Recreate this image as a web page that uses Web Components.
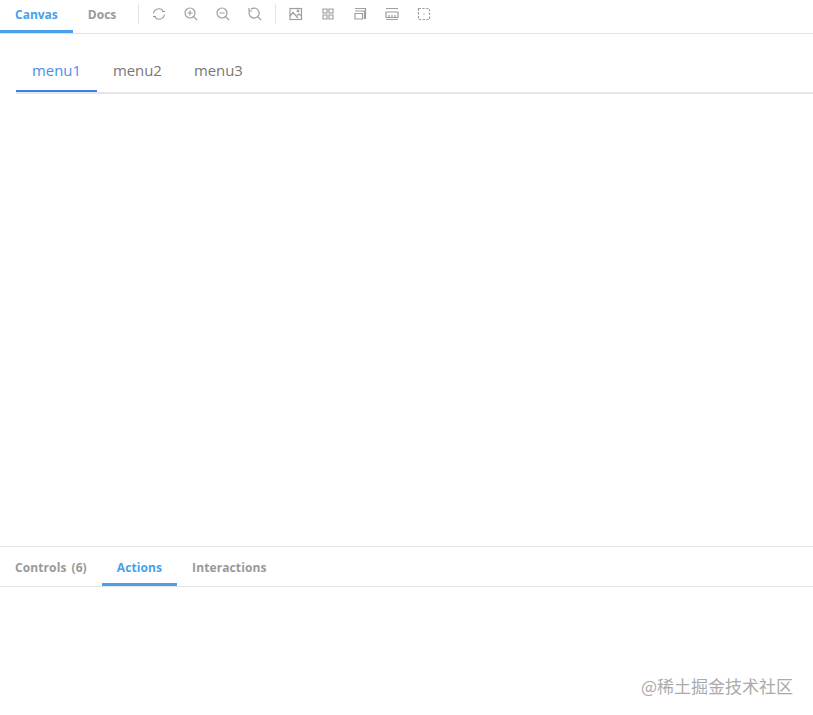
<!DOCTYPE html>
<html lang="en"><head><meta charset="utf-8"><title>Storybook</title>
<style>html,body{margin:0;height:100%;background:#fff}body{font-family:"Open Sans","Liberation Sans",sans-serif}</style></head>
<body><sb-app></sb-app>
<script>
const def=(n,html,extra)=>customElements.define(n,class extends HTMLElement{constructor(){super();this.attachShadow({mode:'open'}).innerHTML=html;}connectedCallback(){extra&&extra(this)}});
def('sb-tab',`<style>:host{display:flex;align-items:center;box-sizing:border-box;height:100%;padding:var(--tab-top,0) 15px 0;font:700 12px/1 "Open Sans","Liberation Sans",sans-serif;letter-spacing:var(--tab-ls,0);word-spacing:1.8px;color:#999;border-bottom:3px solid transparent;white-space:nowrap}
:host([active]){color:#4a9fe8;border-bottom-color:#4a9fe8}</style><slot></slot>`);
def('sb-tool',`<style>:host{display:flex;width:32px;height:100%;box-sizing:border-box;padding-bottom:5px;align-items:center;justify-content:center;color:#9e9e9e}svg{width:14px;height:14px;fill:none;stroke:currentColor;stroke-width:1.2}</style><svg viewBox="0 0 14 14"><slot></slot></svg>`,el=>{el.shadowRoot.querySelector('svg').innerHTML=el.getAttribute('d')});
def('sb-sep',`<style>:host{display:block;align-self:flex-start;width:1px;height:20px;background:#e4e4e4;margin:4px 4px 0}:host([first]){margin-left:7px}</style>`);
def('sb-toolbar',`<style>:host{display:flex;flex:none;height:34px;box-sizing:border-box;border-bottom:1px solid #e2e2e2}</style><slot></slot>`);
def('sb-menu-item',`<style>:host{display:flex;align-items:center;box-sizing:border-box;height:42px;padding:1px 16px 0;font:14.9px/1 "Open Sans","Liberation Sans",sans-serif;color:#777;border-bottom:2px solid transparent}
:host([active]){color:#4a8fe8;border-bottom-color:#3f7fe6}</style><slot></slot>`);
def('sb-menu',`<style>:host{display:flex;margin:16px 0 0 16px;border-bottom:2px solid #e6e6ea;height:42px}</style><slot></slot>`);
def('sb-canvas',`<style>:host{display:block;flex:1;min-height:0}</style><slot></slot>`);
def('sb-panel',`<style>:host{display:block;flex:none;height:169px;box-sizing:border-box;border-top:1px solid #e2e2e2;--tab-top:5px;--tab-ls:.1px}
.tabs{display:flex;height:40px;box-sizing:border-box;border-bottom:1px solid #e2e2e2}</style><div class="tabs"><slot></slot></div>`);
def('sb-watermark',`<style>:host{position:absolute;right:20px;bottom:18px;font:17px/22px "Noto Sans CJK SC","Open Sans",sans-serif;color:#aaa;white-space:nowrap}</style><slot></slot>`);
def('sb-app',`<style>:host{display:flex;flex-direction:column;height:100vh;position:relative;overflow:hidden}</style>
<sb-toolbar>
<sb-tab active>Canvas</sb-tab><sb-tab>Docs</sb-tab><sb-sep first></sb-sep>
<sb-tool d='<path d="M1.5 6.5A5.5 5.5 0 0 1 11.2 3.8M12.5 7.5A5.5 5.5 0 0 1 2.8 10.2"/><path d="M13 4.5H10M1 9.5H4"/>'></sb-tool>
<sb-tool d='<circle cx="6" cy="6" r="5"/><path d="M9.7 9.7L13 13M3.5 6h5M6 3.5v5"/>'></sb-tool>
<sb-tool d='<circle cx="6" cy="6" r="5"/><path d="M9.7 9.7L13 13M3.5 6h5"/>'></sb-tool>
<sb-tool d='<path d="M3 2.2A5 5 0 1 1 1.4 4.5"/><path d="M9.7 9.7L13 13M1 1v3h3"/>'></sb-tool>
<sb-sep></sb-sep>
<sb-tool d='<rect x="1" y="1.5" width="11.5" height="11"/><path d="M1 9l3-3.5 5 5.5M8 8.5l2-1.5 2.5 2"/><circle cx="9" cy="4" r=".8"/>'></sb-tool>
<sb-tool d='<path d="M2 2h4v4H2zM8 2h4v4H8zM2 8h4v4H2zM8 8h4v4H8z"/>'></sb-tool>
<sb-tool d='<path d="M2 6.5h7.5V12H2zM2 4h9.5v8M2 1.5h10.5V12"/>'></sb-tool>
<sb-tool d='<path d="M1 1.5h12M1 12.5h12M1 5h12v5.5H1z"/><path d="M4 8v2.5M7 8v2.5M10 8v2.5"/>'></sb-tool>
<sb-tool d='<rect x="1.5" y="1.5" width="11" height="11" stroke-dasharray="2.4 1.4"/><path d="M6.3 7h1.4"/>'></sb-tool>
</sb-toolbar>
<sb-canvas><sb-menu><sb-menu-item active>menu1</sb-menu-item><sb-menu-item>menu2</sb-menu-item><sb-menu-item>menu3</sb-menu-item></sb-menu></sb-canvas>
<sb-panel><sb-tab>Controls (6)</sb-tab><sb-tab active>Actions</sb-tab><sb-tab>Interactions</sb-tab></sb-panel>
<sb-watermark>@稀土掘金技术社区</sb-watermark>`);
</script></body></html>
